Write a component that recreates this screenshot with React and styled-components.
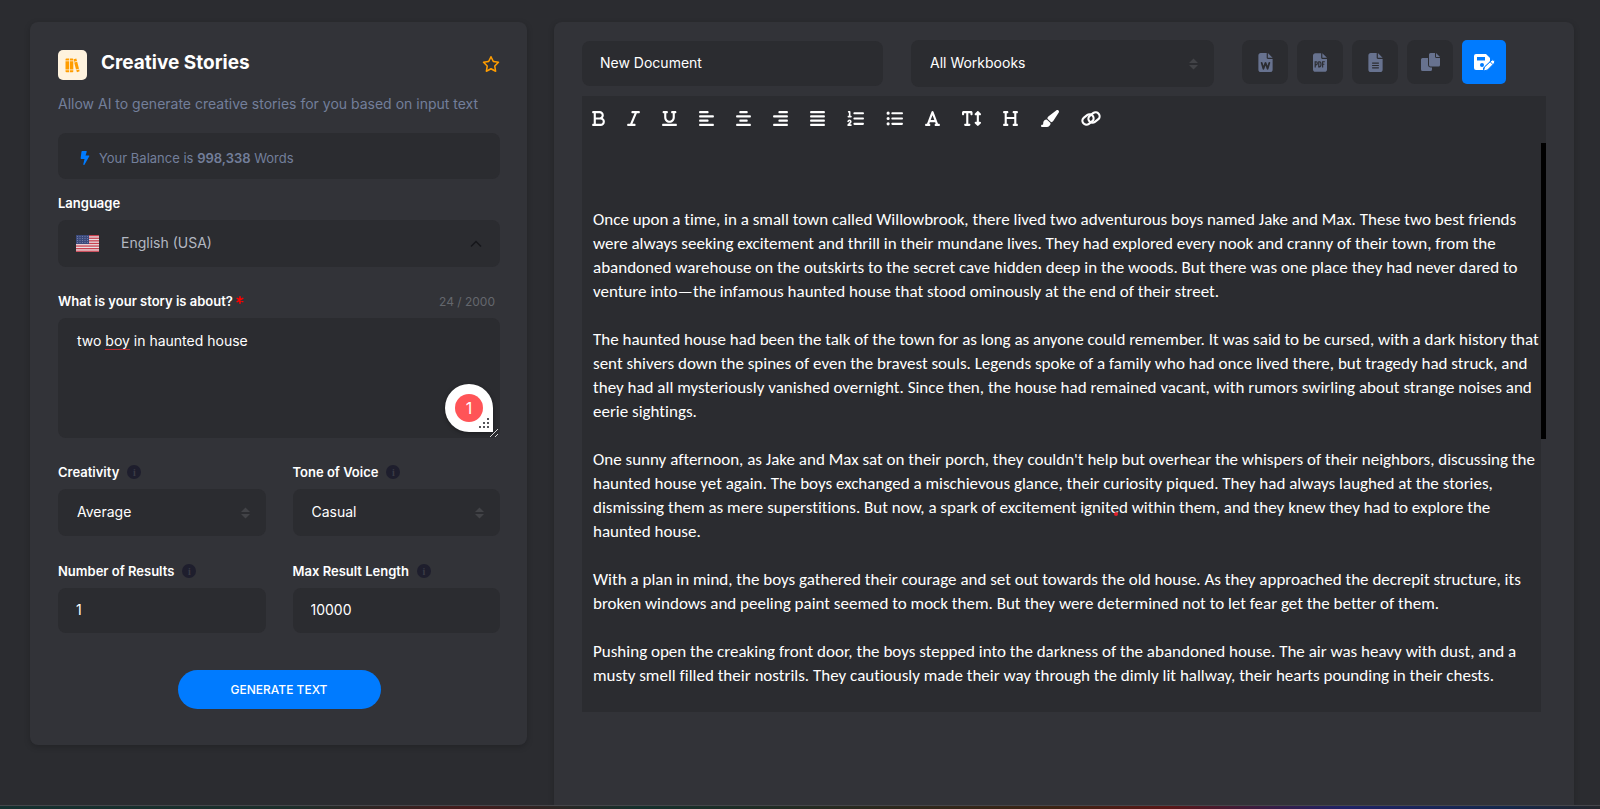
import React, { useState } from "react";
import styled, { createGlobalStyle } from "styled-components";
import { FaBolt } from "react-icons/fa";
import {
  FaBold,
  FaItalic,
  FaUnderline,
  FaAlignLeft,
  FaAlignCenter,
  FaAlignRight,
  FaAlignJustify,
  FaListOl,
  FaListUl,
  FaFont,
  FaTextHeight,
  FaHeading,
  FaPaintbrush,
  FaRegStar,
  FaFileWord,
  FaFileLines,
} from "react-icons/fa6";

const GlobalStyle = createGlobalStyle`
  * { box-sizing: border-box; }

  body {
    margin: 0;
    background: #2b2c30;
    color: #fff;
    font-family: Inter, "Open Sans", sans-serif;
    font-size: 14px;
  }

  button, input, textarea, select {
    font: inherit;
    color: inherit;
  }
`;

/* ------------------ PAGE ------------------ */
const Page = styled.div`
  display: flex;
  flex-direction: column;
  height: 100vh;
  overflow: hidden;
`;

const Columns = styled.main`
  flex: 1;
  min-height: 0;
  display: grid;
  grid-template-columns: minmax(0, 497fr) minmax(0, 1020fr);
  gap: 27px;
  align-items: start;
  padding: 22px 26px 0 30px;
`;

const BottomStrip = styled.footer`
  flex: none;
  height: 4px;
  border-top: 1px solid #45464a;
  background: linear-gradient(
    90deg,
    #14302f 0%,
    #1c2f2b 18%,
    #451c1c 29%,
    #14302c 40%,
    #3c2414 66%,
    #5a1717 73%,
    #1f2266 84%,
    #14284c 94%,
    #24262b 100%
  );
`;

const Card = styled.section`
  background: #323338;
  border-radius: 8px;
  box-shadow: 0 2px 6px rgba(0, 0, 0, 0.2);
`;

/* ------------------ FORM CARD ------------------ */
const FormCard = styled(Card).attrs({ as: "form" })`
  display: flex;
  flex-direction: column;
  padding: 24px 27px 36px 28px;
`;

const TitleRow = styled.header`
  display: flex;
  align-items: center;
  gap: 14px;
  height: 38px;
`;

const TileIcon = styled.span`
  display: grid;
  place-items: center;
  width: 29px;
  height: 30px;
  border-radius: 5px;
  background: #fff3de;
`;

const Title = styled.h1`
  flex: 1;
  margin: 0;
  padding-bottom: 4px;
  font-size: 19px;
  line-height: 30px;
  font-weight: 700;
`;

const StarButton = styled.button`
  display: grid;
  place-items: center;
  padding: 0 0 2px;
  border: 0;
  background: none;
  color: #ff9d00;
  font-size: 18px;
`;

const Description = styled.p`
  margin: 10px 0 19px;
  line-height: 20px;
  color: #737f9b;
  white-space: nowrap;
`;

const Balance = styled.p`
  display: flex;
  align-items: center;
  gap: 7px;
  height: 46px;
  margin: 0 0 14px;
  padding: 4px 20px 0;
  border-radius: 8px;
  background: #2b2c30;
  color: #737f9b;
  font-size: 13px;

  svg {
    color: #007bff;
    font-size: 14px;
  }

  b {
    font-weight: 600;
  }
`;

const Fields = styled.div`
  display: grid;
  gap: 24px;
`;

const Pair = styled.div`
  display: grid;
  grid-template-columns: 1fr 1fr;
  gap: 25px 27px;
`;

const Field = styled.div`
  display: flex;
  flex-direction: column;
  min-width: 0;
`;

const LabelRow = styled.div`
  display: flex;
  align-items: center;
  gap: 8px;
  height: 20px;
  margin-bottom: 7px;
`;

const Label = styled.label`
  font-size: 13px;
  line-height: 20px;
  font-weight: 600;
  white-space: nowrap;

  svg {
    width: 8px;
    height: 8px;
    margin-bottom: 2px;
  }
`;

const Counter = styled.span`
  margin-left: auto;
  padding-right: 5px;
  color: #64676d;
  font-size: 12px;
`;

const InfoDot = styled.span`
  display: grid;
  place-items: center;
  width: 14px;
  height: 14px;
  border-radius: 50%;
  background: #1e1e2d;
  color: #3a3b45;
  font: 700 10px "Liberation Serif", serif;
`;

const SelectBox = styled.div`
  display: flex;
  align-items: center;
  gap: ${({ $flag }) => ($flag ? 3 : 0)}px;
  height: 47px;
  padding: 0 ${({ $flag }) => ($flag ? 18 : 16)}px;
  padding-left: ${({ $flag }) => ($flag ? 18 : 0)}px;
  border-radius: 8px;
  background: #2b2c30;
  color: ${({ $flag }) => ($flag ? "#b3b8c2" : "#fff")};

  > svg {
    flex: none;
  }
`;

const Select = styled.select`
  flex: 1;
  min-width: 0;
  height: 100%;
  padding: 0 19px 2px;
  border: 0;
  outline: 0;
  background: none;
  appearance: none;
`;

const TextInput = styled.input`
  width: 100%;
  min-width: 0;
  height: 45px;
  padding: 0 18px 2px;
  border: 0;
  border-radius: 8px;
  outline: 0;
  background: #2b2c30;
`;

const PromptWrap = styled.div`
  position: relative;
  height: 120px;
`;

const Prompt = styled.textarea`
  display: block;
  width: 100%;
  height: 100%;
  padding: 13px 19px;
  border: 0;
  border-radius: 8px;
  outline: 0;
  background: #2b2c30;
  line-height: 20px;
  resize: none;
`;

const SpellLayer = styled.div`
  position: absolute;
  inset: 0;
  padding: 13px 19px;
  color: transparent;
  line-height: 20px;
  pointer-events: none;

  span {
    border-bottom: 1px solid #b3262e;
  }
`;

const CheckerBadge = styled.button`
  position: absolute;
  right: 7px;
  bottom: 6px;
  display: grid;
  place-items: center;
  width: 48px;
  height: 48px;
  padding: 0;
  border: 0;
  border-radius: 24px 24px 0 24px;
  background: #fff;
  box-shadow: 0 1px 4px rgba(0, 0, 0, 0.4);

  span {
    width: 28px;
    height: 28px;
    border-radius: 50%;
    background: #ff5457;
    color: #fff;
    font-size: 16px;
    line-height: 28px;
  }

  svg {
    position: absolute;
    right: 3px;
    bottom: 3px;
  }
`;

const Grip = styled.svg`
  position: absolute;
  right: 2px;
  bottom: 1px;
`;

const Generate = styled.button`
  align-self: center;
  width: 203px;
  height: 39px;
  margin-top: 37px;
  border: 0;
  border-radius: 20px;
  background: #007bff;
  font-size: 12px;
  font-weight: 500;
`;

/* ------------------ DOCUMENT CARD ------------------ */
const DocCard = styled(Card)`
  align-self: stretch;
  padding: 18px 28px 0;
  border-radius: 8px 8px 0 0;
`;

const DocBar = styled.div`
  display: grid;
  grid-template-columns: minmax(0, 301fr) minmax(0, 303fr) auto;
  column-gap: 28px;
  align-items: center;
  height: 47px;
  margin-right: 40px;
  margin-bottom: 9px;
`;

const Actions = styled.div`
  display: flex;
  gap: 9px;
  padding-bottom: 3px;
`;

const ActionButton = styled.button`
  display: grid;
  place-items: center;
  width: ${({ $primary }) => ($primary ? 44 : 46)}px;
  height: 44px;
  padding: 0;
  border: 0;
  border-radius: ${({ $primary }) => ($primary ? 5 : 8)}px;
  background: ${({ $primary }) => ($primary ? "#007bff" : "#2b2c30")};
  color: ${({ $primary }) => ($primary ? "#fff" : "#67728f")};
  font-size: 19px;
`;

const Toolbar = styled.div`
  display: flex;
  align-items: center;
  gap: 22px;
  height: 47px;
  padding: 0 10px 2px;
  background: #2b2c30;
`;

const Tool = styled.button`
  display: grid;
  place-items: center;
  padding: 0;
  border: 0;
  background: none;

  svg {
    width: ${({ $width }) => $width}px;
    height: 17px;
  }
`;

const EditorBody = styled.div`
  display: flex;
`;

const Story = styled.article`
  flex: 1;
  min-width: 0;
  padding: 65px 1px 24px 11px;
  background: #2b2c30;
  font-family: Carlito, Lato, sans-serif;
  font-size: 17px;
  line-height: 24px;
  font-variant-ligatures: none;

  p {
    position: relative;
    margin: 0;
  }

  p + p {
    margin-top: 24px;
  }
`;

const Mark = styled.span`
  position: absolute;
  left: 55%;
  top: 64px;
  width: 4px;
  height: 4px;
  border-radius: 50%;
  background: #e0202a;
`;

const ScrollTrack = styled.div`
  width: 5px;
`;

const ScrollThumb = styled.div`
  height: 52%;
  background: #000;
`;

/* ------------------ ICONS ------------------ */
const BooksIcon = () => (
  <svg width="15" height="15" viewBox="0 0 15 15" fill="#ff9d00">
    <path d="M0.5 1.5Q0.5 0.5 1.5 0.5H4V2.5H0.5ZM0.5 3.3H4V11.5H0.5ZM0.5 12.3H4V14.3H1.5Q0.5 14.3 0.5 13.3Z" />
    <path d="M4.8 0.5H7.5Q8.3 0.5 8.3 1.5V2.5H4.8ZM4.8 3.3H8.3V11.5H4.8ZM4.8 12.3H8.3V13.3Q8.3 14.3 7.5 14.3H4.8Z" />
    <path d="M8.8 1.3L11.3 0.6L12 3L9 3.8ZM9.2 4.6L12.2 3.8L14 10.7L11 11.5ZM11.2 12.2L14.2 11.4L14.6 13.2L12 14.3Z" />
  </svg>
);

const RequiredIcon = () => (
  <svg viewBox="0 0 8 8" stroke="#f00" strokeWidth="1.6" strokeLinecap="round">
    <path d="M4 0.8V7.2M1.2 2.4L6.8 5.6M6.8 2.4L1.2 5.6" />
  </svg>
);

const FlagIcon = () => (
  <svg width="23" height="17" viewBox="0 0 23 17">
    <rect width="23" height="17" fill="#e9dfe3" />
    {[0, 1, 2, 3, 4, 5, 6].map((i) => (
      <rect key={i} y={i * 2.6} width="23" height="1.3" fill="#c8414f" />
    ))}
    <rect width="13" height="9" fill="#3b4a7c" />
    {[1.5, 3.5, 5.5, 7.5].map((y) =>
      [1.5, 4, 6.5, 9, 11.5].map((x) => (
        <circle key={`${x}-${y}`} cx={x} cy={y} r="0.4" fill="#b9c0d8" />
      ))
    )}
  </svg>
);

const ChevronUp = () => (
  <svg width="12" height="8" viewBox="0 0 12 8" fill="none" stroke="#16171a" strokeWidth="1.5">
    <path d="M1 6.5L6 1.5L11 6.5" />
  </svg>
);

const SortIcon = () => (
  <svg width="9" height="12" viewBox="0 0 9 12" fill="#424347">
    <path d="M0 5L4.5 0.5L9 5ZM0 7H9L4.5 11.5Z" />
  </svg>
);

const ChainIcon = () => (
  <svg viewBox="0 0 20 17" fill="none" stroke="currentColor" strokeWidth="2.2">
    <rect x="1" y="5.5" width="12" height="8" rx="4" transform="rotate(-38 7 9.5)" />
    <rect x="7" y="3.5" width="12" height="8" rx="4" transform="rotate(-38 13 7.5)" />
  </svg>
);

const PdfIcon = () => (
  <svg width="14" height="19" viewBox="0 0 384 512" fill="currentColor">
    <path d="M64 0C29 0 0 29 0 64v384c0 35 29 64 64 64h256c35 0 64-29 64-64V160H256c-18 0-32-14-32-32V0zM256 0v128h128z" />
    <g fill="none" stroke="#2b2c30" strokeWidth="32">
      <path d="M60 390V235h28q30 0 30 42t-30 42H60M158 375V235h20q42 0 42 70t-42 70zM264 390V235h60M264 305h48" />
    </g>
  </svg>
);

const CopyIcon = () => (
  <svg width="19" height="18" viewBox="0 0 19 18" fill="currentColor">
    <path d="M1.5 5H7V11.5Q7 14.5 10 14.5H11V16.5Q11 18 9.5 18H1.5Q0 18 0 16.5V6.5Q0 5 1.5 5Z" />
    <path d="M9.5 0H14V3.5Q14 5 15.5 5H19V12Q19 13.5 17.5 13.5H9.5Q8 13.5 8 12V1.5Q8 0 9.5 0Z" />
    <path d="M15 0L19 4H15Z" />
  </svg>
);

const SaveIcon = () => (
  <svg width="21" height="18" viewBox="0 0 21 18">
    <path fill="#fff" d="M2 1H12L16 5V8.5L9 15V17H2Q0 17 0 15V3Q0 1 2 1Z" />
    <path fill="#007bff" d="M3 4H11V7.5H3Z" />
    <circle cx="8" cy="12" r="2" fill="#007bff" />
    <path fill="#fff" stroke="#007bff" strokeWidth="1" d="M9.5 18L10.5 14L18 7Q19 6.5 20 7.5T20.5 10L13.5 17Z" />
    <path stroke="#007bff" strokeWidth="1" d="M16 8.5L18.8 11.5" />
  </svg>
);

/* ------------------ DATA ------------------ */
const tools = [
  { name: "Bold", icon: <FaBold />, width: 13 },
  { name: "Italic", icon: <FaItalic />, width: 13 },
  { name: "Underline", icon: <FaUnderline />, width: 15 },
  { name: "Align left", icon: <FaAlignLeft />, width: 15 },
  { name: "Align center", icon: <FaAlignCenter />, width: 15 },
  { name: "Align right", icon: <FaAlignRight />, width: 15 },
  { name: "Justify", icon: <FaAlignJustify />, width: 15 },
  { name: "Ordered list", icon: <FaListOl />, width: 17 },
  { name: "Unordered list", icon: <FaListUl />, width: 17 },
  { name: "Font", icon: <FaFont />, width: 15 },
  { name: "Font size", icon: <FaTextHeight />, width: 19 },
  { name: "Heading", icon: <FaHeading />, width: 15 },
  { name: "Color", icon: <FaPaintbrush />, width: 19 },
  { name: "Link", icon: <ChainIcon />, width: 20 },
];

const actions = [
  { name: "Export to Word", icon: <FaFileWord /> },
  { name: "Export to PDF", icon: <PdfIcon /> },
  { name: "Export to text", icon: <FaFileLines /> },
  { name: "Copy", icon: <CopyIcon /> },
  { name: "Save", icon: <SaveIcon />, primary: true },
];

/* ------------------ COMPONENTS ------------------ */
const StoryForm = () => {
  const [prompt, setPrompt] = useState("two boy in haunted house");

  return (
    <FormCard onSubmit={(e) => e.preventDefault()}>
      <TitleRow>
        <TileIcon>
          <BooksIcon />
        </TileIcon>
        <Title>Creative Stories</Title>
        <StarButton type="button" aria-label="Add to favorites">
          <FaRegStar />
        </StarButton>
      </TitleRow>
      <Description>
        Allow AI to generate creative stories for you based on input text
      </Description>
      <Balance>
        <FaBolt />
        <span>
          Your Balance is <b>998,338</b> Words
        </span>
      </Balance>

      <Fields>
        <Field>
          <LabelRow>
            <Label htmlFor="language">Language</Label>
          </LabelRow>
          <SelectBox $flag>
            <FlagIcon />
            <Select id="language">
              <option>English (USA)</option>
            </Select>
            <ChevronUp />
          </SelectBox>
        </Field>

        <Field>
          <LabelRow>
            <Label htmlFor="prompt">
              What is your story is about? <RequiredIcon />
            </Label>
            <Counter>{prompt.length} / 2000</Counter>
          </LabelRow>
          <PromptWrap>
            <Prompt
              id="prompt"
              maxLength={2000}
              spellCheck={false}
              value={prompt}
              onChange={(e) => setPrompt(e.target.value)}
            />
            <SpellLayer aria-hidden="true">
              two <span>boy</span>
            </SpellLayer>
            <CheckerBadge type="button" aria-label="Writing suggestions">
              <span>1</span>
              <svg width="12" height="12" viewBox="0 0 12 12" fill="#55565a">
                <path d="M9 1h2v2H9zM5 5h2v2H5zM9 5h2v2H9zM1 9h2v2H1zM5 9h2v2H5zM9 9h2v2H9z" />
              </svg>
            </CheckerBadge>
            <Grip width="8" height="8" viewBox="0 0 8 8" stroke="#d5d5d5">
              <path d="M0 8L8 0M5 8L8 5" />
            </Grip>
          </PromptWrap>
        </Field>

        <Pair>
          <Field>
            <LabelRow>
              <Label htmlFor="creativity">Creativity</Label>
              <InfoDot>i</InfoDot>
            </LabelRow>
            <SelectBox>
              <Select id="creativity">
                <option>Average</option>
              </Select>
              <SortIcon />
            </SelectBox>
          </Field>
          <Field>
            <LabelRow>
              <Label htmlFor="tone">Tone of Voice</Label>
              <InfoDot>i</InfoDot>
            </LabelRow>
            <SelectBox>
              <Select id="tone">
                <option>Casual</option>
              </Select>
              <SortIcon />
            </SelectBox>
          </Field>
          <Field>
            <LabelRow>
              <Label htmlFor="results">Number of Results</Label>
              <InfoDot>i</InfoDot>
            </LabelRow>
            <TextInput id="results" defaultValue="1" />
          </Field>
          <Field>
            <LabelRow>
              <Label htmlFor="length">Max Result Length</Label>
              <InfoDot>i</InfoDot>
            </LabelRow>
            <TextInput id="length" defaultValue="10000" />
          </Field>
        </Pair>
      </Fields>

      <Generate type="submit">GENERATE TEXT</Generate>
    </FormCard>
  );
};

const DocumentEditor = () => (
  <DocCard>
    <DocBar>
      <TextInput aria-label="Document name" defaultValue="New Document" />
      <SelectBox>
        <Select aria-label="Workbook">
          <option>All Workbooks</option>
        </Select>
        <SortIcon />
      </SelectBox>
      <Actions>
        {actions.map((action) => (
          <ActionButton
            key={action.name}
            type="button"
            aria-label={action.name}
            $primary={action.primary}
          >
            {action.icon}
          </ActionButton>
        ))}
      </Actions>
    </DocBar>
    <Toolbar>
      {tools.map((tool) => (
        <Tool key={tool.name} type="button" aria-label={tool.name} $width={tool.width}>
          {tool.icon}
        </Tool>
      ))}
    </Toolbar>
    <EditorBody>
      <Story>
        <p>
          Once upon a time, in a small town called Willowbrook, there lived two
          adventurous boys named Jake and Max. These two best friends were
          always seeking excitement and thrill in their mundane lives. They had
          explored every nook and cranny of their town, from the abandoned
          warehouse on the outskirts to the secret cave hidden deep in the
          woods. But there was one place they had never dared to venture
          into—the infamous haunted house that stood ominously at the end of
          their street.
        </p>
        <p>
          The haunted house had been the talk of the town for as long as anyone
          could remember. It was said to be cursed, with a dark history that
          sent shivers down the spines of even the bravest souls. Legends spoke
          of a family who had once lived there, but tragedy had struck, and they
          had all mysteriously vanished overnight. Since then, the house had
          remained vacant, with rumors swirling about strange noises and eerie
          sightings.
        </p>
        <p>
          One sunny afternoon, as Jake and Max sat on their porch, they couldn't
          help but overhear the whispers of their neighbors, discussing the
          haunted house yet again. The boys exchanged a mischievous glance,
          their curiosity piqued. They had always laughed at the stories,
          dismissing them as mere superstitions. But now, a spark of excitement
          ignited within them, and they knew they had to explore the haunted
          house.
          <Mark />
        </p>
        <p>
          With a plan in mind, the boys gathered their courage and set out
          towards the old house. As they approached the decrepit structure, its
          broken windows and peeling paint seemed to mock them. But they were
          determined not to let fear get the better of them.
        </p>
        <p>
          Pushing open the creaking front door, the boys stepped into the
          darkness of the abandoned house. The air was heavy with dust, and a
          musty smell filled their nostrils. They cautiously made their way
          through the dimly lit hallway, their hearts pounding in their chests.
        </p>
      </Story>
      <ScrollTrack>
        <ScrollThumb />
      </ScrollTrack>
    </EditorBody>
  </DocCard>
);

const App = () => (
  <>
    <GlobalStyle />
    <Page>
      <Columns>
        <StoryForm />
        <DocumentEditor />
      </Columns>
      <BottomStrip />
    </Page>
  </>
);

export default App;
